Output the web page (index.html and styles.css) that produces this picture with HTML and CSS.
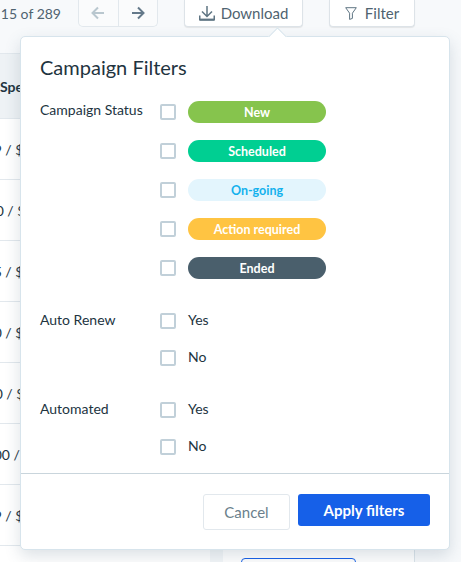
FILE: index.html
```html
<!DOCTYPE html>
<html lang="en">
<head>
    <meta charset="UTF-8">
    <meta name="viewport" content="width=device-width, initial-scale=1.0">
    <title>Campaign Filters</title>
    <link rel="stylesheet" href="styles.css">
</head>
<body>
    <div class="toolbar">
        <div class="page-count"><span>1 - 15 of 289</span></div>
        <div class="pager">
            <button class="pager-btn" aria-label="Previous">
                <svg width="14" height="14" viewBox="0 0 14 14" fill="none" stroke="#b9c7cf" stroke-width="2"><path d="M13 7H1.5M7 1.5 1.5 7 7 12.5"/></svg>
            </button>
            <button class="pager-btn" aria-label="Next">
                <svg width="14" height="14" viewBox="0 0 14 14" fill="none" stroke="#64798a" stroke-width="2"><path d="M1 7h11.5M7 1.5 12.5 7 7 12.5"/></svg>
            </button>
        </div>
        <button class="tool-btn download-btn">
            <svg width="16" height="15" viewBox="0 0 16 15" fill="none" stroke="#5f7583" stroke-width="1.5"><path d="M8 0v10M3 5.5 8 10.5 13 5.5M.75 9.5v4h14.5v-4"/><path d="M.5 13.8h15" stroke-width="2"/></svg>
            Download
        </button>
        <button class="tool-btn filter-btn">
            <svg width="12" height="13" viewBox="0 0 12 13" fill="none" stroke="#5f7583" stroke-width="1"><path d="M.7.7h10.6L7.4 6.2v5.2L4.6 12.4V6.2z"/></svg>
            Filter
        </button>
    </div>

    <div class="table">
        <div class="table-head">Spend / Budget</div>
        <div class="table-row"><span class="spend">$1,249 / $3,000</span></div>
        <div class="table-row"><span class="spend shift-3">$1,200 / $3,000</span></div>
        <div class="table-row"><span class="spend">$1,125 / $2,500</span></div>
        <div class="table-row"><span class="spend">$1,140 / $2,000</span></div>
        <div class="table-row"><span class="spend shift-2">$1,200 / $5,000</span></div>
        <div class="table-row"><span class="spend shift-wide">$11,500 / $9,000</span></div>
        <div class="table-row"><span class="spend">$1,149 / $4,000</span></div>
        <div class="table-last">
            <div class="last-left"></div>
            <div class="last-gutter"></div>
            <div class="last-right"><div class="outline-btn"></div></div>
        </div>
    </div>

    <div class="popover">
        <div class="popover-arrow"></div>
        <h1>Campaign Filters</h1>
        <div class="filter-group status-group">
            <div class="group-label">Campaign Status</div>
            <div class="group-options status-options">
                <label class="option"><input type="checkbox"><span class="pill pill-new">New</span></label>
                <label class="option"><input type="checkbox"><span class="pill pill-scheduled">Scheduled</span></label>
                <label class="option"><input type="checkbox"><span class="pill pill-ongoing">On-going</span></label>
                <label class="option"><input type="checkbox"><span class="pill pill-action">Action required</span></label>
                <label class="option"><input type="checkbox"><span class="pill pill-ended">Ended</span></label>
            </div>
        </div>
        <div class="filter-group renew-group">
            <div class="group-label">Auto Renew</div>
            <div class="group-options">
                <label class="option"><input type="checkbox"><span class="option-text">Yes</span></label>
                <label class="option"><input type="checkbox"><span class="option-text">No</span></label>
            </div>
        </div>
        <div class="filter-group automated-group">
            <div class="group-label">Automated</div>
            <div class="group-options">
                <label class="option"><input type="checkbox"><span class="option-text">Yes</span></label>
                <label class="option"><input type="checkbox"><span class="option-text">No</span></label>
            </div>
        </div>
        <div class="popover-footer">
            <button class="cancel-btn">Cancel</button>
            <button class="apply-btn">Apply filters</button>
        </div>
    </div>
</body>
</html>
```

FILE: styles.css
```css
html, body { height: 100%; }
body { margin: 0; overflow: hidden; position: relative; background: #f7f9fb; color: #22343f; font-family: Lato, "Open Sans", sans-serif; font-size: 14px; }
button { font-family: inherit; padding: 0; cursor: pointer; }

.toolbar { display: flex; height: 27px; }
.page-count { width: 61px; margin-right: 17px; display: flex; justify-content: flex-end; align-items: center; white-space: nowrap; font-size: 14px; color: #4f6370; }
.pager { display: flex; width: 80px; box-sizing: border-box; border: 1px solid #e2e8ed; border-top: 0; border-radius: 0 0 5px 5px; background: #fafbfc; margin-right: 26px; }
.pager-btn { flex: 1; display: flex; align-items: center; justify-content: center; background: none; border: 0; }
.pager-btn + .pager-btn { border-left: 1px solid #e2e8ed; }
.tool-btn { display: flex; align-items: center; justify-content: center; gap: 6px; box-sizing: border-box; background: #fff; border: 1px solid #dde3e8; border-top: 0; border-radius: 0 0 4px 4px; box-shadow: 0 1px 1px rgba(0,0,0,0.08); font-size: 15px; color: #4f6370; }
.download-btn { width: 119px; margin-right: 26px; }
.filter-btn { width: 86px; gap: 8px; }

.table { width: 415px; margin-top: 26px; box-sizing: border-box; border-right: 1px solid #dbe4ea; background: #fff; }
.table-head { height: 64px; line-height: 66px; background: #eef2f5; border-top: 1px solid #e2e8ed; border-bottom: 1px solid #e2e8ed; font-weight: 700; white-space: nowrap; }
.table-row { height: 60px; line-height: 62px; border-bottom: 1px solid #e2e8ed; white-space: nowrap; overflow: hidden; }
.spend { margin-left: -42px; }
.spend.shift-3 { margin-left: -40px; }
.spend.shift-2 { margin-left: -41px; }
.spend.shift-wide { margin-left: -42px; }
.table-last { display: flex; height: 20px; }
.last-left { width: 210px; }
.last-gutter { width: 13px; background: #f4f7f9; }
.last-right { padding: 12px 0 0 18px; }
.outline-btn { width: 113px; height: 20px; border: 1px solid #1660e8; border-radius: 4px; }

.popover { position: absolute; top: 36px; left: 20px; width: 430px; height: 514px; box-sizing: border-box; padding-top: 19px; background: #fff; border: 1px solid #d7e4ec; border-radius: 5px; box-shadow: 0 6px 16px rgba(60,90,110,0.18); display: flex; flex-direction: column; }
.popover-arrow { position: absolute; top: -7px; left: 250px; width: 12px; height: 12px; background: #fff; border-top: 1px solid #d7e4ec; border-left: 1px solid #d7e4ec; transform: rotate(45deg); }
h1 { margin: 0 0 0 19px; font-size: 20px; line-height: 22px; font-weight: 400; color: #1f3440; }

.filter-group { display: flex; padding-left: 19px; }
.group-label { width: 120px; line-height: 18px; }
.group-options { display: flex; flex-direction: column; gap: 21px; }
.option { display: flex; align-items: center; gap: 12px; height: 16px; line-height: 16px; }
.option input { appearance: none; margin: 0; width: 16px; height: 16px; box-sizing: border-box; border: 2px solid #c1d0d9; border-radius: 2px; background: #fff; }
.option-text { margin-top: -2px; }

.status-group { margin-top: 23px; }
.status-options { gap: 17px; }
.status-options .option { height: 22px; }
.renew-group { margin-top: 34px; }
.renew-group .group-label, .automated-group .group-label { margin-top: -2px; }
.automated-group { margin-top: 36px; }

.pill { width: 138px; height: 22px; line-height: 23px; border-radius: 11px; text-align: center; font-size: 12.5px; font-weight: 700; color: #fff; }
.pill-new { background: #86c44d; }
.pill-scheduled { background: #00cf92; }
.pill-ongoing { background: #e3f5fd; color: #13b1ed; }
.pill-action { background: #ffc442; }
.pill-ended { background: #4a5f6c; }

.popover-footer { margin-top: 18px; padding: 20px 19px 0 0; border-top: 1px solid #c9d5dc; display: flex; justify-content: flex-end; align-items: flex-start; gap: 8px; }
.cancel-btn { width: 87px; height: 36px; background: #fff; border: 1px solid #e2e8ed; border-radius: 3px; font-size: 15px; color: #6b7f8c; }
.apply-btn { width: 132px; height: 32px; background: #1660e8; border: 0; border-radius: 3px; font-size: 15px; font-weight: 700; color: #fff; }
```
